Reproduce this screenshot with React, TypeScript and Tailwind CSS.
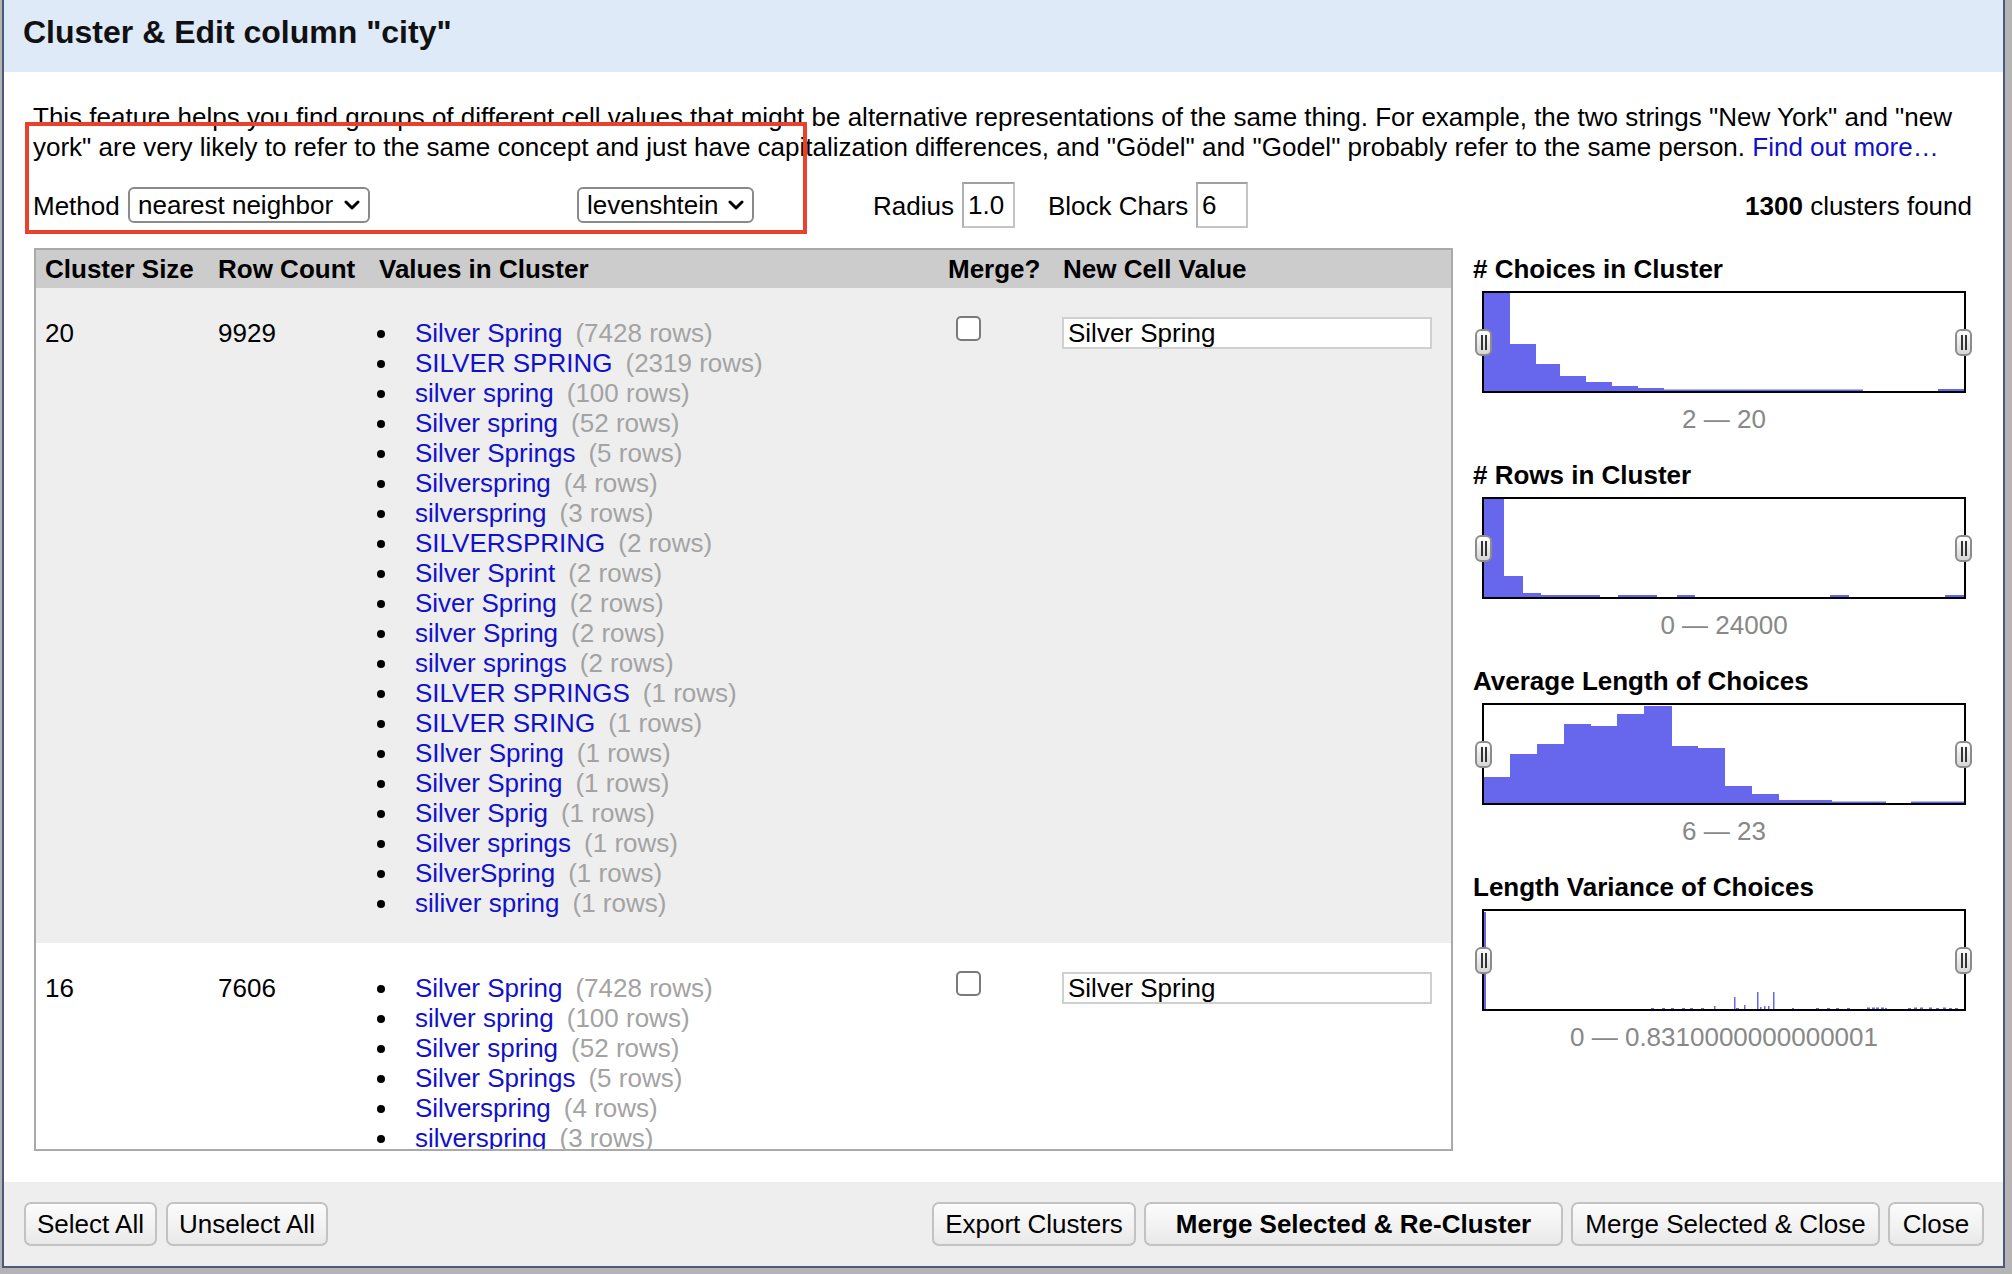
import React from "react";

type Bar = [number, number, number];

const choicesBars: Bar[] = [
  [0, 26, 98], [26, 52, 47], [52, 76, 27], [76, 102, 15], [102, 128, 9],
  [128, 154, 5], [154, 180, 3], [180, 379, 1.5], [454, 480, 2],
];
const rowsBars: Bar[] = [
  [0, 20, 98], [20, 39, 21], [39, 57, 4], [57, 116, 2], [134, 173, 2],
  [193, 211, 2], [346, 365, 2], [461, 480, 2],
];
const avgBars: Bar[] = [
  [0, 26, 26], [26, 53, 49], [53, 80, 59], [80, 107, 79], [107, 133, 77],
  [133, 160, 89], [160, 188, 97], [188, 214, 57], [214, 241, 55], [241, 268, 17],
  [268, 295, 9], [295, 348, 3], [348, 402, 1.5], [427, 480, 1.5],
];
const varBars: Bar[] = [
  [0, 2, 97],
  [250, 251.5, 12], [273, 274.5, 17], [289, 290.5, 17], [260, 261.5, 4],
  [280, 281.5, 3], [284, 285.5, 3], [230, 231.5, 3], [276, 277.5, 2],
  [167, 170, 1], [178, 181, 1], [187, 190, 1], [198, 201, 1], [206, 209, 1],
  [217, 220, 1], [252, 255, 1], [308, 310, 1], [332, 335, 1], [343, 346, 1],
  [352, 355, 1], [363, 366, 1], [383, 386, 1.5], [388, 391, 1.5], [392, 395, 1.5],
  [397, 400, 1.5], [401, 403, 1], [424, 427, 1], [430, 433, 1.5], [436, 439, 1.5],
  [445, 448, 1.5], [452, 455, 1], [459, 462, 1.5], [465, 468, 1], [471, 474, 1],
];

const cluster1: [string, number][] = [
  ["Silver Spring", 7428],
  ["SILVER SPRING", 2319],
  ["silver spring", 100],
  ["Silver spring", 52],
  ["Silver Springs", 5],
  ["Silverspring", 4],
  ["silverspring", 3],
  ["SILVERSPRING", 2],
  ["Silver Sprint", 2],
  ["Siver Spring", 2],
  ["silver Spring", 2],
  ["silver springs", 2],
  ["SILVER SPRINGS", 1],
  ["SILVER SRING", 1],
  ["SIlver Spring", 1],
  ["Silver Spring", 1],
  ["Silver Sprig", 1],
  ["Silver springs", 1],
  ["SilverSpring", 1],
  ["siliver spring", 1],
];

const cluster2: [string, number][] = [
  ["Silver Spring", 7428],
  ["silver spring", 100],
  ["Silver spring", 52],
  ["Silver Springs", 5],
  ["Silverspring", 4],
  ["silverspring", 3],
  ["SILVERSPRING", 2],
  ["Silver Sprint", 2],
  ["silver Spring", 2],
];

function Handle({ pos }: { pos: "l" | "r" }) {
  return (
    <div
      className={
        "absolute top-[36px] w-[17px] h-[27px] rounded-[6px] border-2 border-[#8c8c8c] bg-linear-to-b from-white to-[#d6d6d6] flex items-center justify-center gap-[2px] " +
        (pos === "l" ? "left-[-9px]" : "left-[471px]")
      }
    >
      <div className="w-[2px] h-[15px] bg-[#333]" />
      <div className="w-[2px] h-[15px] bg-[#333]" />
    </div>
  );
}

function Histogram({ title, bars, range }: { title: string; bars: Bar[]; range: string }) {
  return (
    <div className="h-[206px]">
      <div className="text-[26px] leading-[30px] font-bold">{title}</div>
      <div className="relative mt-[7px] ml-[9px] w-[484px] h-[102px] border-2 border-black bg-white">
        <svg width="480" height="98" viewBox="0 0 480 98" className="block">
          {bars.map(([x0, x1, h], i) => (
            <rect key={i} x={x0} y={98 - h} width={x1 - x0} height={h} fill="#6767ee" />
          ))}
        </svg>
        <Handle pos="l" />
        <Handle pos="r" />
      </div>
      <div className="mt-[11px] ml-[9px] w-[484px] text-center text-[26px] leading-[30px] text-[#888]">
        {range}
      </div>
    </div>
  );
}

function Values({ items }: { items: [string, number][] }) {
  return (
    <div className="pl-[7px]">
      {items.map(([v, n], i) => (
        <div key={i} className="flex h-[30px] leading-[30px] whitespace-pre">
          <span className="w-[38px] shrink-0 pt-[12px]">
            <span className="block w-[8px] h-[8px] rounded-full bg-black" />
          </span>
          <span className="text-[#1111cc]">{v}</span>
          <span className="ml-[13px] text-[#a3a3a3]">({n} rows)</span>
        </div>
      ))}
    </div>
  );
}

const cols = "grid grid-cols-[173px_161px_569px_115px_397px]";

function ClusterRow({ size, count, items, shaded }: { size: number; count: number; items: [string, number][]; shaded: boolean }) {
  return (
    <div className={cols + " pt-[30px] pb-[25px] text-[26px] leading-[30px] " + (shaded ? "bg-[#eeeeee]" : "bg-white")}>
      <div className="pl-[9px]">{size}</div>
      <div className="pl-[9px]">{count}</div>
      <Values items={items} />
      <div className="pl-[17px]">
        <div className="mt-[-2px] w-[25px] h-[25px] rounded-[5px] border-2 border-[#7a7a7a] bg-white" />
      </div>
      <div className="pl-[8px]">
        <div className="mt-[-1px] w-[370px] h-[32px] border-2 border-[#d0d0d0] bg-white pl-[4px] leading-[28px]">Silver Spring</div>
      </div>
    </div>
  );
}

function Btn({ w, bold, children }: { w: string; bold?: boolean; children: React.ReactNode }) {
  return (
    <div
      className={
        "h-[44px] shrink-0 rounded-[7px] border-2 border-[#c2c2c2] bg-linear-to-b from-[#fcfcfc] to-[#e9e9e9] flex items-center justify-center text-[26px] leading-[30px] whitespace-nowrap pb-[1px] " +
        w +
        (bold ? " font-bold" : "")
      }
    >
      {children}
    </div>
  );
}

function Chevron() {
  return (
    <svg width="16" height="11" viewBox="0 0 16 11" className="block">
      <path d="M2 2 L8 8 L14 2" fill="none" stroke="#000" strokeWidth="3" strokeLinecap="round" strokeLinejoin="round" />
    </svg>
  );
}

export default function App() {
  return (
    <div className="relative w-[2012px] h-[1274px] overflow-hidden bg-[#b4b4b4] font-['Liberation_Sans',Arial,sans-serif] text-black">
      <div className="ml-[2px] w-[2003px] h-[1268px] flex flex-col border-x-2 border-b-2 border-[#4b5a78] bg-white">
        <div className="h-[72px] shrink-0 bg-[#dfeaf9] pl-[19px] pt-[14px] text-[32px] font-bold leading-[37px] text-[#111]">
          Cluster &amp; Edit column "city"
        </div>

        <div className="flex-1 flex flex-col pl-[29px] pr-[31px] pt-[30px]">
          <p className="text-[26px] leading-[30px]">
            This feature helps you find groups of different cell values that might be alternative representations of the same thing. For example, the two strings "New York" and "new
            <br />
            york" are very likely to refer to the same concept and just have capitalization differences, and "Gödel" and "Godel" probably refer to the same person.{" "}
            <span className="text-[#1111cc]">Find out more…</span>
          </p>

          <div className="mt-[20px] h-[46px] flex items-center text-[26px] leading-[30px] whitespace-nowrap">
            <div className="w-[95px] pt-[1px]">Method</div>
            <div className="w-[449px]">
              <div className="w-[242px] h-[36px] rounded-[6px] border-2 border-[#8a8a8a] bg-white flex items-center pl-[8px] pr-[8px] justify-between">
                <span>nearest neighbor</span>
                <Chevron />
              </div>
            </div>
            <div className="w-[177px] h-[36px] rounded-[6px] border-2 border-[#8a8a8a] bg-white flex items-center pl-[8px] pr-[8px] justify-between">
              <span>levenshtein</span>
              <Chevron />
            </div>
            <div className="w-[119px]" />
            <div className="w-[89px] pt-[1px]">Radius</div>
            <div className="w-[53px] h-[46px] border-2 border-[#c4c4c4] border-t-[#a0a0a0] border-l-[#b0b0b0] pl-[4px] flex items-center">1.0</div>
            <div className="w-[33px]" />
            <div className="w-[148px] pt-[1px]">Block Chars</div>
            <div className="w-[52px] h-[46px] border-2 border-[#c4c4c4] border-t-[#a0a0a0] border-l-[#b0b0b0] pl-[4px] flex items-center">6</div>
            <div className="ml-auto pt-[1px]">
              <span className="font-bold">1300</span> clusters found
            </div>
          </div>

          <div className="mt-[20px] flex">
            <div className="ml-[1px] w-[1419px] h-[903px] shrink-0 border-2 border-[#aaaaaa] overflow-hidden bg-white">
              <div className={cols + " h-[38px] bg-[#cccccc] pt-[4px] text-[26px] leading-[30px] font-bold whitespace-nowrap"}>
                <div className="pl-[9px]">Cluster Size</div>
                <div className="pl-[9px]">Row Count</div>
                <div className="pl-[9px]">Values in Cluster</div>
                <div className="pl-[9px]">Merge?</div>
                <div className="pl-[9px]">New Cell Value</div>
              </div>
              <ClusterRow size={20} count={9929} items={cluster1} shaded />
              <ClusterRow size={16} count={7606} items={cluster2} shaded={false} />
            </div>

            <div className="ml-[20px] pt-[6px] w-[500px]">
              <Histogram title="# Choices in Cluster" bars={choicesBars} range="2 — 20" />
              <Histogram title="# Rows in Cluster" bars={rowsBars} range="0 — 24000" />
              <Histogram title="Average Length of Choices" bars={avgBars} range="6 — 23" />
              <Histogram title="Length Variance of Choices" bars={varBars} range="0 — 0.8310000000000001" />
            </div>
          </div>
        </div>

        <div className="h-[84px] shrink-0 bg-[#eeeeee] flex items-start pt-[20px] pl-[20px] pr-[19px]">
          <div className="flex gap-[9px]">
            <Btn w="w-[133px]">Select All</Btn>
            <Btn w="w-[162px]">Unselect All</Btn>
          </div>
          <div className="ml-auto flex gap-[8px]">
            <Btn w="w-[204px]">Export Clusters</Btn>
            <Btn w="w-[419px]" bold>Merge Selected &amp; Re-Cluster</Btn>
            <Btn w="w-[309px]">Merge Selected &amp; Close</Btn>
            <Btn w="w-[96px]">Close</Btn>
          </div>
        </div>
      </div>

      <div className="absolute left-[25px] top-[122px] w-[782px] h-[112px] border-[4px] border-[#e8412c]" />
    </div>
  );
}
